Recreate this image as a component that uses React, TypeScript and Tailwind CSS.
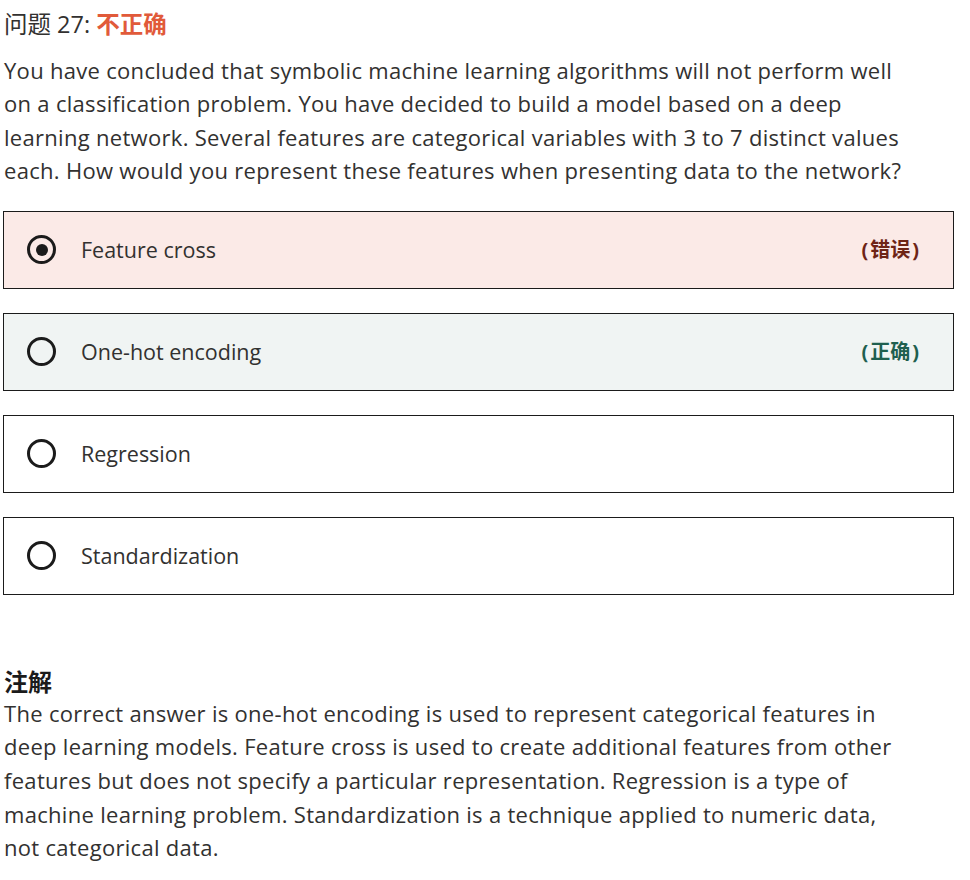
import React from 'react';

const options = [
    { label: "Feature cross", selected: true, status: "wrong" },
    { label: "One-hot encoding", selected: false, status: "right" },
    { label: "Regression", selected: false, status: null },
    { label: "Standardization", selected: false, status: null },
];

const Radio = ({ checked }: { checked: boolean }) => (
    <span className="flex items-center justify-center w-[29px] h-[29px] rounded-full border-[3px] border-[#1b1b1b] shrink-0">
        {checked && <span className="w-[12px] h-[12px] rounded-full bg-[#1b1b1b]" />}
    </span>
);

const Verdict = ({ text, color }: { text: string; color: string }) => (
    <span className={`text-[20px] font-bold ${color}`}>
        <span className="mr-[2px]">(</span>{text}<span className="ml-[2px]">)</span>
    </span>
);

export default function App() {
    return (
        <div className="bg-white min-h-screen text-[#323130] font-['Open_Sans','Noto_Sans_CJK_SC',sans-serif]">
            <div className="w-[951px] ml-[3px] pt-[7px]">
                {/* Header */}
                <div className="text-[23.5px] leading-[34px] pl-px">
                    问题 27: <span className="font-bold text-[#e15a3a]">不正确</span>
                </div>
                <p className="mt-[13px] text-[22px] leading-[33.4px] tracking-[0.3px] pl-px whitespace-nowrap">
                    You have concluded that symbolic machine learning algorithms will not perform well<br />
                    on a classification problem. You have decided to build a model based on a deep<br />
                    learning network. Several features are categorical variables with 3 to 7 distinct values<br />
                    each. How would you represent these features when presenting data to the network?
                </p>

                {/* Options */}
                <div className="mt-[23px] flex flex-col gap-[24px]">
                    {options.map(o => (
                        <div key={o.label}
                            className={`h-[78px] border border-[#1b1b1b] flex items-center pl-[23px] pr-[34px] ${o.status === "wrong" ? "bg-[#fbeae7]" : o.status === "right" ? "bg-[#f0f4f3]" : "bg-white"}`}>
                            <Radio checked={o.selected} />
                            <span className="ml-[25px] text-[21.5px] flex-1">{o.label}</span>
                            {o.status === "wrong" && <Verdict text="错误" color="text-[#6e2416]" />}
                            {o.status === "right" && <Verdict text="正确" color="text-[#1f5f4f]" />}
                        </div>
                    ))}
                </div>

                {/* Explanation */}
                <div className="mt-[72px] pl-px">
                    <div className="text-[24px] font-bold leading-[30px] text-[#1b1b1b]">注解</div>
                    <p className="text-[22px] leading-[33.7px] tracking-[0.3px] whitespace-nowrap">
                        The correct answer is one-hot encoding is used to represent categorical features in<br />
                        deep learning models. Feature cross is used to create additional features from other<br />
                        features but does not specify a particular representation. Regression is a type of<br />
                        machine learning problem. Standardization is a technique applied to numeric data,<br />
                        not categorical data.
                    </p>
                </div>
            </div>
        </div>
    );
}
